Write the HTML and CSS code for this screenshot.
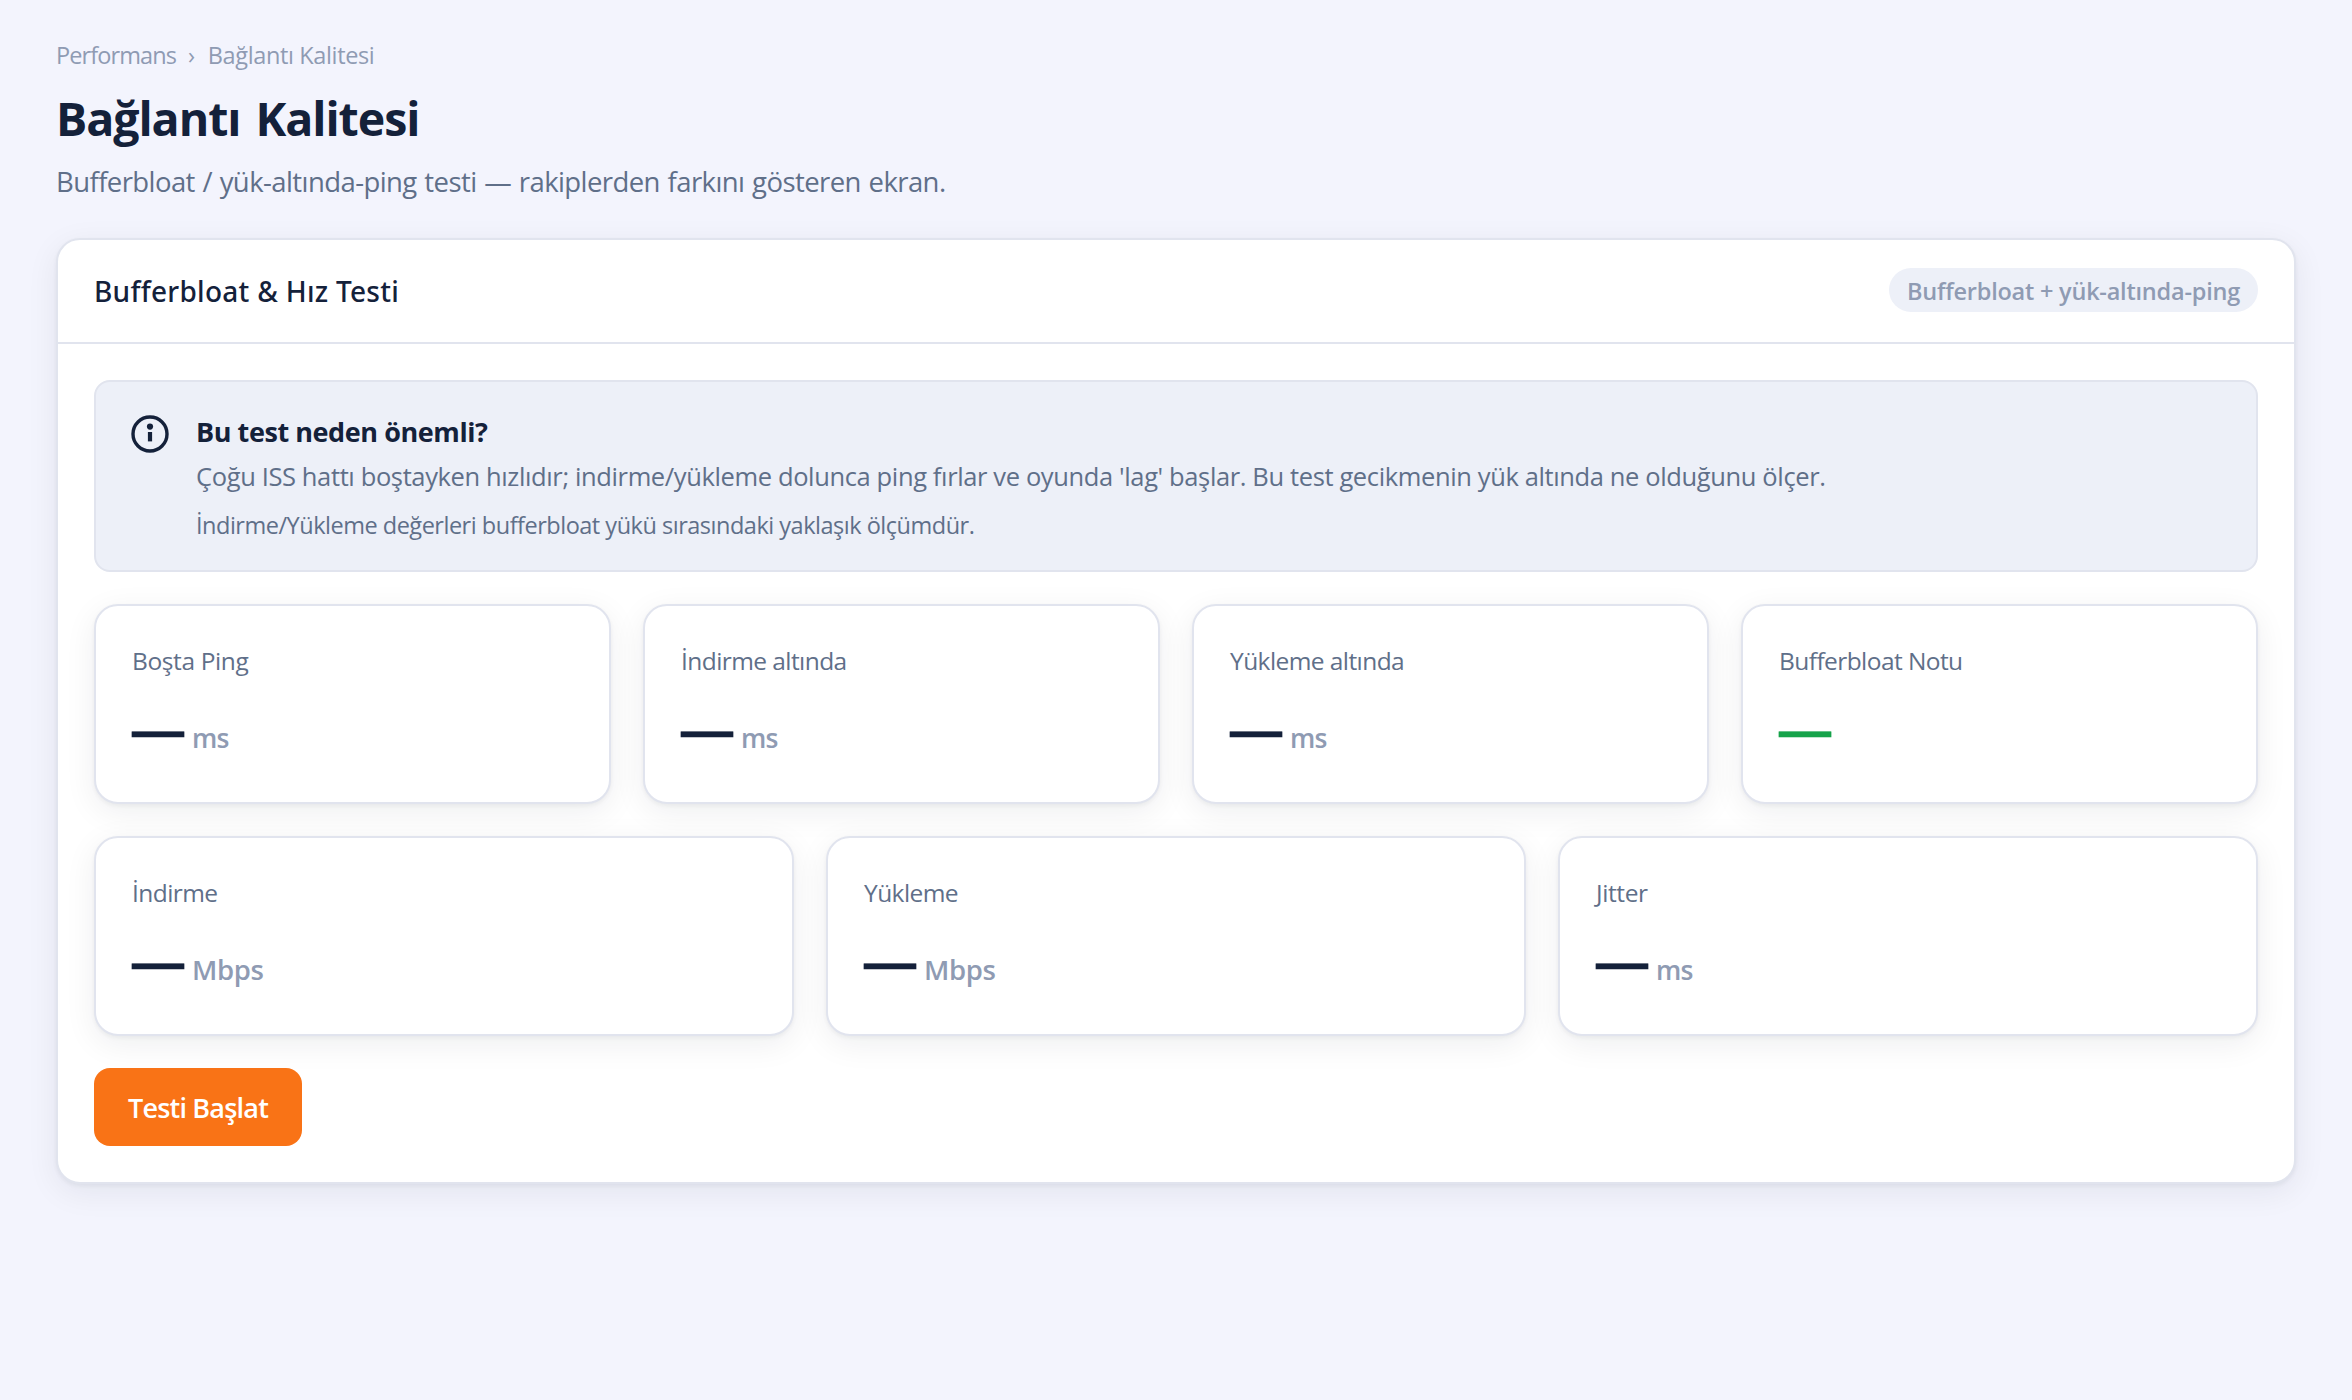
FILE: index.html
```
<!DOCTYPE html>
<html lang="tr">
<head>
<meta charset="utf-8">
<title>Bağlantı Kalitesi</title>
<link rel="stylesheet" href="styles.css">
</head>
<body>
<main class="page">
  <nav class="crumbs"><span class="crumb-parent">Performans</span><span class="crumb-sep">›</span><span>Bağlantı Kalitesi</span></nav>
  <h1 class="page-title">Bağlantı Kalitesi</h1>
  <p class="page-sub">Bufferbloat / yük-altında-ping testi — rakiplerden farkını gösteren ekran.</p>

  <section class="panel">
    <header class="panel-head">
      <h2 class="panel-title">Bufferbloat &amp; Hız Testi</h2>
      <span class="badge">Bufferbloat + yük-altında-ping</span>
    </header>
    <div class="panel-body">
      <div class="info">
        <svg class="info-icon" viewBox="0 0 38 38" fill="none">
          <circle cx="19" cy="19" r="17" stroke="currentColor" stroke-width="3.4"/>
          <circle cx="19" cy="11.6" r="3.1" fill="currentColor"/>
          <path d="M19 17v9.4" stroke="currentColor" stroke-width="4.2"/>
        </svg>
        <div class="info-text">
          <h3 class="info-title">Bu test neden önemli?</h3>
          <p class="info-desc">Çoğu ISS hattı boştayken hızlıdır; indirme/yükleme dolunca ping fırlar ve oyunda 'lag' başlar. Bu test gecikmenin yük altında ne olduğunu ölçer.</p>
          <p class="info-note">İndirme/Yükleme değerleri bufferbloat yükü sırasındaki yaklaşık ölçümdür.</p>
        </div>
      </div>

      <div class="grid grid-4">
        <article class="card"><div class="label label-wide">Boşta Ping</div><div class="value"><span class="num">—</span><span class="unit unit-ms">ms</span></div></article>
        <article class="card"><div class="label">İndirme altında</div><div class="value"><span class="num">—</span><span class="unit unit-ms">ms</span></div></article>
        <article class="card"><div class="label">Yükleme altında</div><div class="value"><span class="num">—</span><span class="unit unit-ms">ms</span></div></article>
        <article class="card"><div class="label">Bufferbloat Notu</div><div class="value"><span class="num good">—</span></div></article>
      </div>

      <div class="grid grid-3">
        <article class="card"><div class="label">İndirme</div><div class="value"><span class="num">—</span><span class="unit">Mbps</span></div></article>
        <article class="card"><div class="label">Yükleme</div><div class="value"><span class="num">—</span><span class="unit">Mbps</span></div></article>
        <article class="card"><div class="label label-wide">Jitter</div><div class="value"><span class="num">—</span><span class="unit unit-ms">ms</span></div></article>
      </div>

      <button class="start" type="button">Testi Başlat</button>
    </div>
  </section>
</main>
</body>
</html>
```
FILE: styles.css
```
:root {
  --bg: #f3f4fd;
  --ink: #14213a;
  --muted: #5f6f89;
  --faint: #8f9bb3;
  --line: #e1e4ee;
  --soft: #edf0f8;
  --shadow: 0 2px 4px rgba(15, 23, 42, .05), 0 8px 32px rgba(15, 23, 42, .07);
}

* { box-sizing: border-box; margin: 0; }

body {
  min-height: 100vh;
  background: var(--bg);
  color: var(--ink);
  font-family: "Open Sans", "Noto Sans", sans-serif;
}

.page { padding: 39px 56px 0; }

.crumbs {
  display: flex;
  font-size: 23.5px;
  line-height: 32px;
  letter-spacing: -.36px;
  color: var(--faint);
}
.crumb-parent { letter-spacing: -.9px; }
.crumb-sep { margin: 0 13px 0 12px; }

.page-title {
  margin-top: 15px;
  font-size: 46.5px;
  line-height: 64px;
  font-weight: 700;
  letter-spacing: -1.05px;
  word-spacing: 4px;
}

.page-sub {
  margin-top: 12px;
  font-size: 27.5px;
  line-height: 40px;
  letter-spacing: -.58px;
  word-spacing: 1.1px;
  color: var(--muted);
}

.panel {
  margin-top: 36px;
  background: #fff;
  border: 2px solid var(--line);
  border-radius: 24px;
  box-shadow: var(--shadow);
}

.panel-head {
  display: flex;
  align-items: center;
  justify-content: space-between;
  height: 104px;
  padding: 0 36px;
  border-bottom: 2px solid var(--line);
}
.panel-title {
  font-family: "Noto Sans", "Open Sans", sans-serif;
  font-size: 28px;
  line-height: 40px;
  font-weight: 500;
  letter-spacing: .28px;
}
.badge {
  height: 44px;
  margin-bottom: 2px;
  padding: 1px 18px 0;
  border-radius: 22px;
  background: var(--soft);
  color: var(--faint);
  font-size: 23.5px;
  line-height: 44px;
  font-weight: 600;
  letter-spacing: -.22px;
}

.panel-body {
  display: flex;
  flex-direction: column;
  gap: 32px;
  padding: 36px;
}

.info {
  display: flex;
  gap: 27px;
  height: 192px;
  padding: 32px 34px 0 35px;
  background: var(--soft);
  border: 2px solid var(--line);
  border-radius: 16px;
}
.info-icon { width: 38px; height: 38px; margin-top: 1px; flex: none; }
.info-title { font-size: 27px; line-height: 36px; font-weight: 700; letter-spacing: -.43px; }
.info-desc { margin-top: 6px; font-size: 25.5px; line-height: 40px; letter-spacing: -.374px; color: var(--muted); }
.info-note { margin-top: 11px; font-size: 23.5px; line-height: 36px; letter-spacing: -.486px; color: var(--muted); }

.grid { display: grid; gap: 32px; }
.grid-4 { grid-template-columns: repeat(4, 1fr); }
.grid-3 { grid-template-columns: repeat(3, 1fr); }

.card {
  height: 200px;
  padding: 37px 36px 0;
  background: #fff;
  border: 2px solid var(--line);
  border-radius: 24px;
  box-shadow: var(--shadow);
}
.label { font-size: 24.5px; line-height: 36px; letter-spacing: -.57px; color: var(--muted); }
.label-wide { letter-spacing: -.38px; }
.value { display: flex; align-items: baseline; gap: 8px; margin-top: 19px; }
.num { font: 700 52px/64px "Liberation Sans", Arial, sans-serif; -webkit-text-stroke: .7px currentColor; }
.good { color: #16a34a; }
.unit { font-size: 27.5px; line-height: 36px; font-weight: 600; letter-spacing: -.4px; color: var(--faint); }
.unit-ms { font-size: 26.5px; letter-spacing: -.9px; }

.start {
  align-self: flex-start;
  width: 208px;
  height: 78px;
  padding: 1px 0 0;
  border: 0;
  border-radius: 16px;
  background: #f97316;
  color: #fff;
  font: 600 27px/77px "Open Sans", "Noto Sans", sans-serif;
  letter-spacing: -.8px;
}
```
